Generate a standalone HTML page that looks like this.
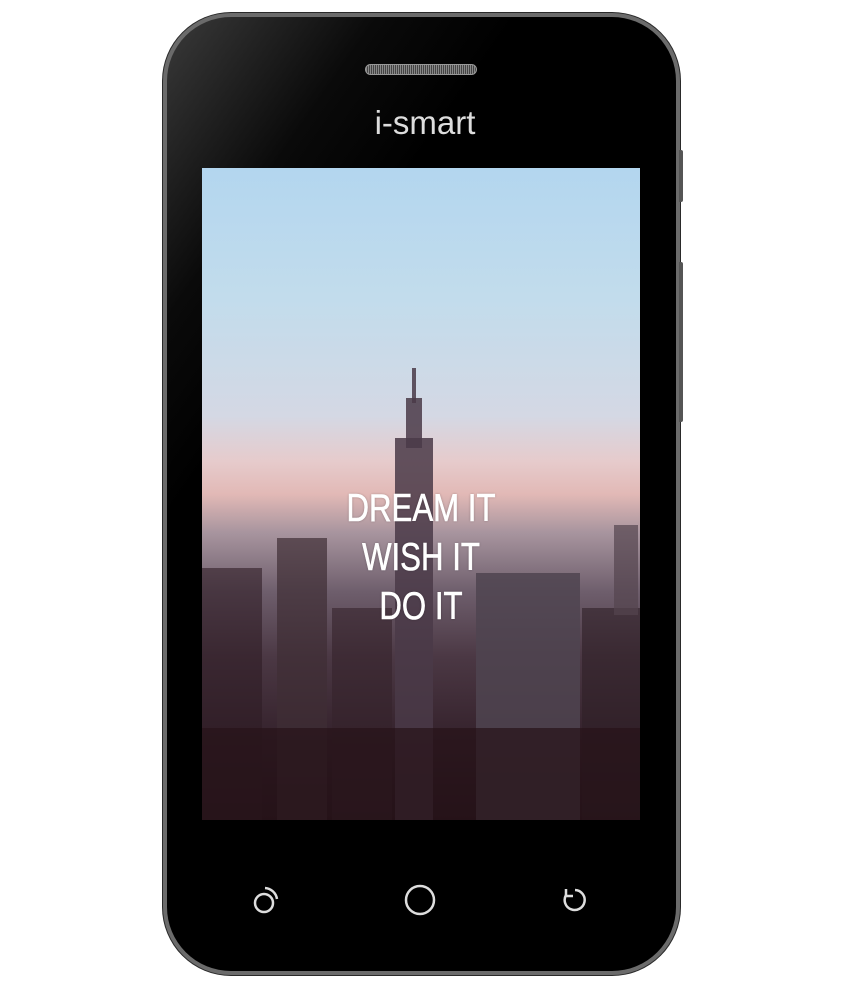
<!DOCTYPE html>
<html><head><style>
html,body{margin:0;padding:0;background:#fff;width:850px;height:995px;overflow:hidden;position:relative;font-family:"Liberation Sans",sans-serif}
.phone{position:absolute;left:163px;top:13px;width:517px;height:962px;border-radius:68px;background:#6b6b6b;box-shadow:0 0 0 1px #2a2a2a}
.inner{position:absolute;left:4px;top:4px;right:4px;bottom:4px;border-radius:64px;background:linear-gradient(125deg,#3a3a3a 0%,#0a0a0a 18%,#000 30%,#000 100%)}
.btn{position:absolute;left:679px;width:4px;background:#555;border-radius:0 2px 2px 0}
.spk{position:absolute;left:365px;top:64px;width:112px;height:11px;border-radius:6px;background:repeating-linear-gradient(90deg,#888 0 1px,#444 1px 2px);border:1px solid #999;box-sizing:border-box}
.logo{position:absolute;left:0;width:850px;top:104px;text-align:center;color:#ddd;font-size:33px}
.screen{position:absolute;left:202px;top:168px;width:438px;height:652px;overflow:hidden;
background:linear-gradient(180deg,#b3d6ef 0%,#c2dcec 20%,#d4d8e4 38%,#e6cbcc 45%,#e2b9b6 50%,#a7949e 56%,#6e5e6c 65%,#4b3844 75%,#34212b 88%,#24131a 100%)}
.txt{position:absolute;left:0;width:438px;top:316px;text-align:center;color:#fff;font-size:39px;line-height:49px;transform:scaleX(0.8);-webkit-text-stroke:0.6px #fff;text-shadow:0 0 3px rgba(0,0,0,.3)}
.b{position:absolute;background:#3d2c36}
</style></head><body>
<div class="phone"><div class="inner"></div></div>
<div class="btn" style="top:150px;height:52px"></div>
<div class="btn" style="top:262px;height:160px"></div>
<div class="spk"></div>
<div class="logo">i-smart</div>
<div class="screen">
<div class="b" style="left:193px;top:270px;width:38px;height:382px;background:#4a3a48;opacity:.85"></div>
<div class="b" style="left:204px;top:230px;width:16px;height:50px;background:#4a3a48;opacity:.85"></div>
<div class="b" style="left:210px;top:200px;width:4px;height:35px;background:#4a3a48;opacity:.85"></div>
<div class="b" style="left:274px;top:405px;width:104px;height:247px;background:#4f4450;opacity:.85"></div>
<div class="b" style="left:75px;top:370px;width:50px;height:282px;background:#3f2d35;opacity:.7"></div>
<div class="b" style="left:0;top:400px;width:60px;height:252px;background:#2f1d25;opacity:.6"></div>
<div class="b" style="left:130px;top:440px;width:60px;height:212px;background:#35232c;opacity:.6"></div>
<div class="b" style="left:380px;top:440px;width:58px;height:212px;background:#2f1f27;opacity:.6"></div>
<div class="b" style="left:412px;top:357px;width:24px;height:90px;background:#54454f;opacity:.7"></div>
<div class="b" style="left:0;top:560px;width:438px;height:92px;background:#261318;opacity:.7"></div>
<div class="txt">DREAM IT<br>WISH IT<br>DO IT</div>
</div>
<svg style="position:absolute;left:0;top:0" width="850" height="995">
<g fill="none" stroke="#ddd" stroke-width="2.5">
<circle cx="264" cy="903" r="9"/>
<path d="M265 888 A13 13 0 0 1 277 899"/>
<circle cx="420" cy="900" r="14"/>
<path d="M566 895 A10 10 0 1 0 575 890"/>
<path d="M566 889 L566 896 L573 896"/>
</g></svg>
</body></html>
